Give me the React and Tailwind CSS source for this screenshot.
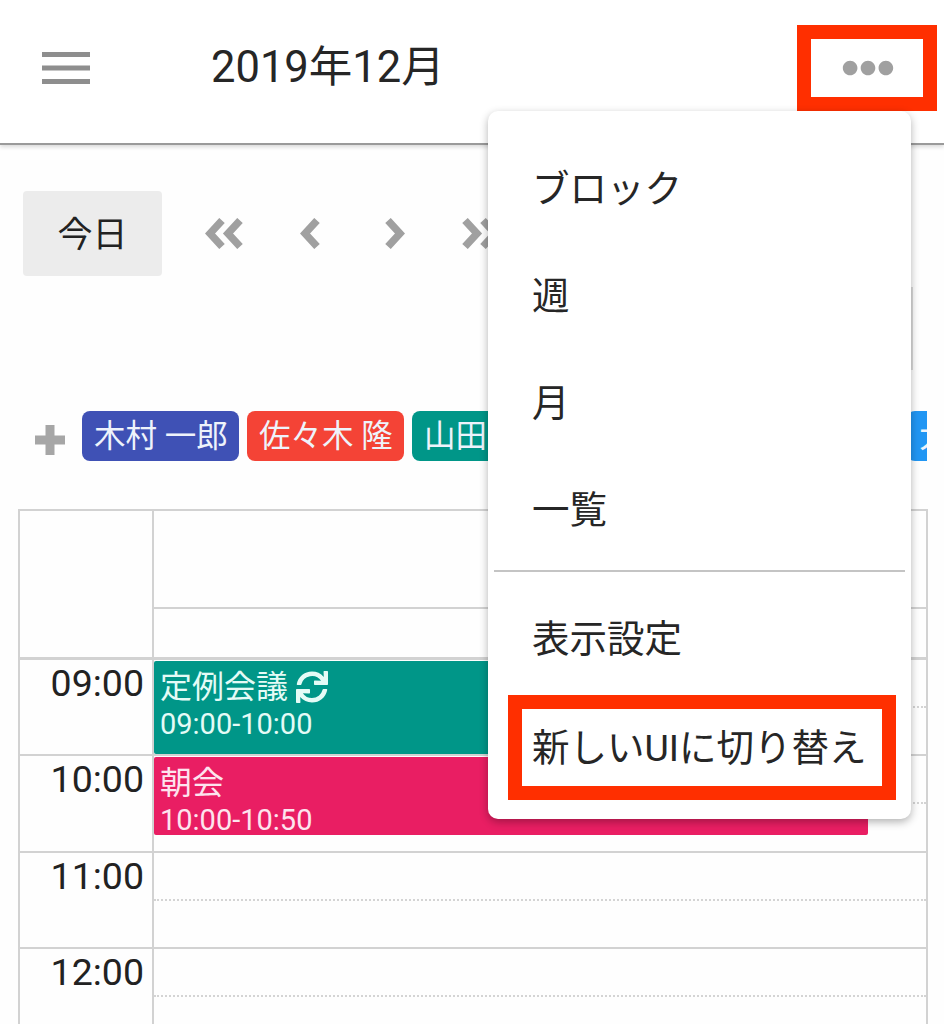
import { FaEllipsisH, FaSync } from 'react-icons/fa'

const menuItems = ['ブロック', '週', '月', '一覧']

const people = [
  { name: '木村 一郎', color: 'bg-[#3f51b5]' },
  { name: '佐々木 隆', color: 'bg-[#f44336]' },
  { name: '山田 太郎', color: 'bg-[#009688]' },
  { name: '鈴木 花子', color: 'bg-[#9c27b0]' },
  { name: '高橋 健太', color: 'bg-[#ff9800]' },
  { name: '大野 健', color: 'bg-[#2196f3]' },
]

// single chevron, points left unless flipped
function Chevron({ flip, double, className }) {
  return (
    <svg width={double ? 38 : 20} height="31" viewBox={double ? '0 0 38 31' : '0 0 20 31'} className={`shrink-0 text-[#a0a0a0] ${flip ? '-scale-x-100' : ''} ${className || ''}`}>
      <polyline points="17,2.5 5,15.5 17,28.5" fill="none" stroke="currentColor" strokeWidth="7.5" />
      {double && <polyline points="35,2.5 23,15.5 35,28.5" fill="none" stroke="currentColor" strokeWidth="7.5" />}
    </svg>
  )
}

function HalfCells() {
  return (
    <>
      <div className="h-[48px] border-b-2 border-dotted border-[#d4d4d4]" />
      <div className="h-[46px]" />
    </>
  )
}

function HourRow({ time, children }) {
  return (
    <div className="flex h-[96.4px] shrink-0 border-b-2 border-[#d2d2d2]">
      <div className="w-[134px] shrink-0 border-r-2 border-[#d2d2d2] pr-[8px] text-right text-[37.5px] leading-[47px] text-[#222]">
        {time}
      </div>
      <div className="relative flex-1">
        <HalfCells />
        {children}
      </div>
    </div>
  )
}

function EventBlock({ title, time, color, height, repeat }) {
  return (
    <div className={`absolute left-0 top-[1px] w-[714px] rounded-[2px] pl-[6px] pt-[4px] ${color} ${height}`}>
      <div className="flex items-center gap-[8px] text-[32px] leading-[44px]">
        {title}
        {repeat && <FaSync size={32} />}
      </div>
      <div className="text-[29px] leading-[30px]">{time}</div>
    </div>
  )
}

export default function App() {
  return (
    <div className="relative h-[1024px] overflow-hidden bg-[#fefefe] font-['Roboto','Noto_Sans_CJK_JP',sans-serif]">
      <header className="flex h-[145px] items-center border-b-2 border-[#9a9a9a] bg-white pb-[8px] pl-[42px] pr-[7px] shadow-[0_2px_4px_rgba(0,0,0,0.15)]">
        <svg width="48" height="32" viewBox="0 0 48 32" className="shrink-0 text-[#8e8e8e]">
          <rect y="0" width="48" height="5" fill="currentColor" />
          <rect y="13.5" width="48" height="5" fill="currentColor" />
          <rect y="27" width="48" height="5" fill="currentColor" />
        </svg>
        <h1 className="ml-[121px] flex-1 text-[43.5px] font-normal text-[#262626]">2019年12月</h1>
        <div className="flex h-[86px] w-[140px] items-center justify-center border-[14px] border-[#ff2f00] pl-[2px] text-[#a0a0a0]">
          <FaEllipsisH size={52} />
        </div>
      </header>

      <div className="mt-[46px] flex items-center pl-[23px]">
        <button className="h-[85px] w-[139px] rounded-[4px] bg-[#ececec] pt-[6px] text-[35px] text-[#222]">今日</button>
        <Chevron double className="ml-[43px]" />
        <Chevron className="ml-[57px]" />
        <Chevron flip className="ml-[65px]" />
        <Chevron flip double className="ml-[57px]" />
      </div>

      {/* view selector, mostly hidden behind the menu */}
      <div className="mt-[11px] h-[83px] w-[913px] border-r-2 border-[#dcdcdc]" />

      <div className="mt-[41px] flex h-[50px] items-center pl-[35px]">
        <svg width="30" height="30" viewBox="0 0 30 30" className="mr-[17px] mt-[8px] shrink-0 text-[#a6a6a6]">
          <path d="M10.5 0h9v10.5H30v9H19.5V30h-9V19.5H0v-9h10.5z" fill="currentColor" />
        </svg>
        <div className="flex w-[845px] gap-[8px] overflow-hidden">
          {people.map(p => (
            <span key={p.name} className={`h-[50px] w-[157px] shrink-0 whitespace-nowrap rounded-[8px] pl-[12px] pt-[2px] text-[31.5px] leading-[48px] text-[#eef3fb] ${p.color}`}>
              {p.name}
            </span>
          ))}
        </div>
      </div>

      <div className="ml-[18px] mt-[48px] flex w-[910px] flex-col border-x-2 border-t-2 border-[#d2d2d2]">
        <div className="flex h-[149px] shrink-0 border-b-[3px] border-[#d2d2d2]">
          <div className="w-[134px] shrink-0 border-r-2 border-[#d2d2d2]" />
          <div className="flex-1">
            <div className="h-[98px] border-b-2 border-[#d2d2d2]" />
          </div>
        </div>
        <HourRow time="09:00">
          <EventBlock title="定例会議" time="09:00-10:00" color="bg-[#009688] text-[#e4fbf6]" height="h-[93px]" repeat />
        </HourRow>
        <HourRow time="10:00">
          <EventBlock title="朝会" time="10:00-10:50" color="bg-[#e91e63] text-[#fde4ee]" height="h-[78px]" />
        </HourRow>
        <HourRow time="11:00" />
        <HourRow time="12:00" />
      </div>

      <nav className="absolute left-[488px] top-[111px] flex h-[708px] w-[423px] flex-col rounded-[10px] bg-white text-[37.5px] text-[#262626] shadow-[0_3px_8px_rgba(0,0,0,0.3)]">
        <div className="pt-[24px]">
          {menuItems.map(item => (
            <div key={item} className="flex h-[107.3px] items-center pl-[44px]">{item}</div>
          ))}
        </div>
        <div className="mx-[6px] mt-[6px] border-t-2 border-[#c4c4c4]" />
        <div className="mt-[13px] flex h-[107px] items-center pl-[44px]">表示設定</div>
        <div className="ml-[20px] mr-[15px] mt-[3px] flex h-[105px] items-center whitespace-nowrap border-[14px] border-[#ff2f00] pl-[10px]">
          新しいUIに切り替え
        </div>
      </nav>
    </div>
  )
}
